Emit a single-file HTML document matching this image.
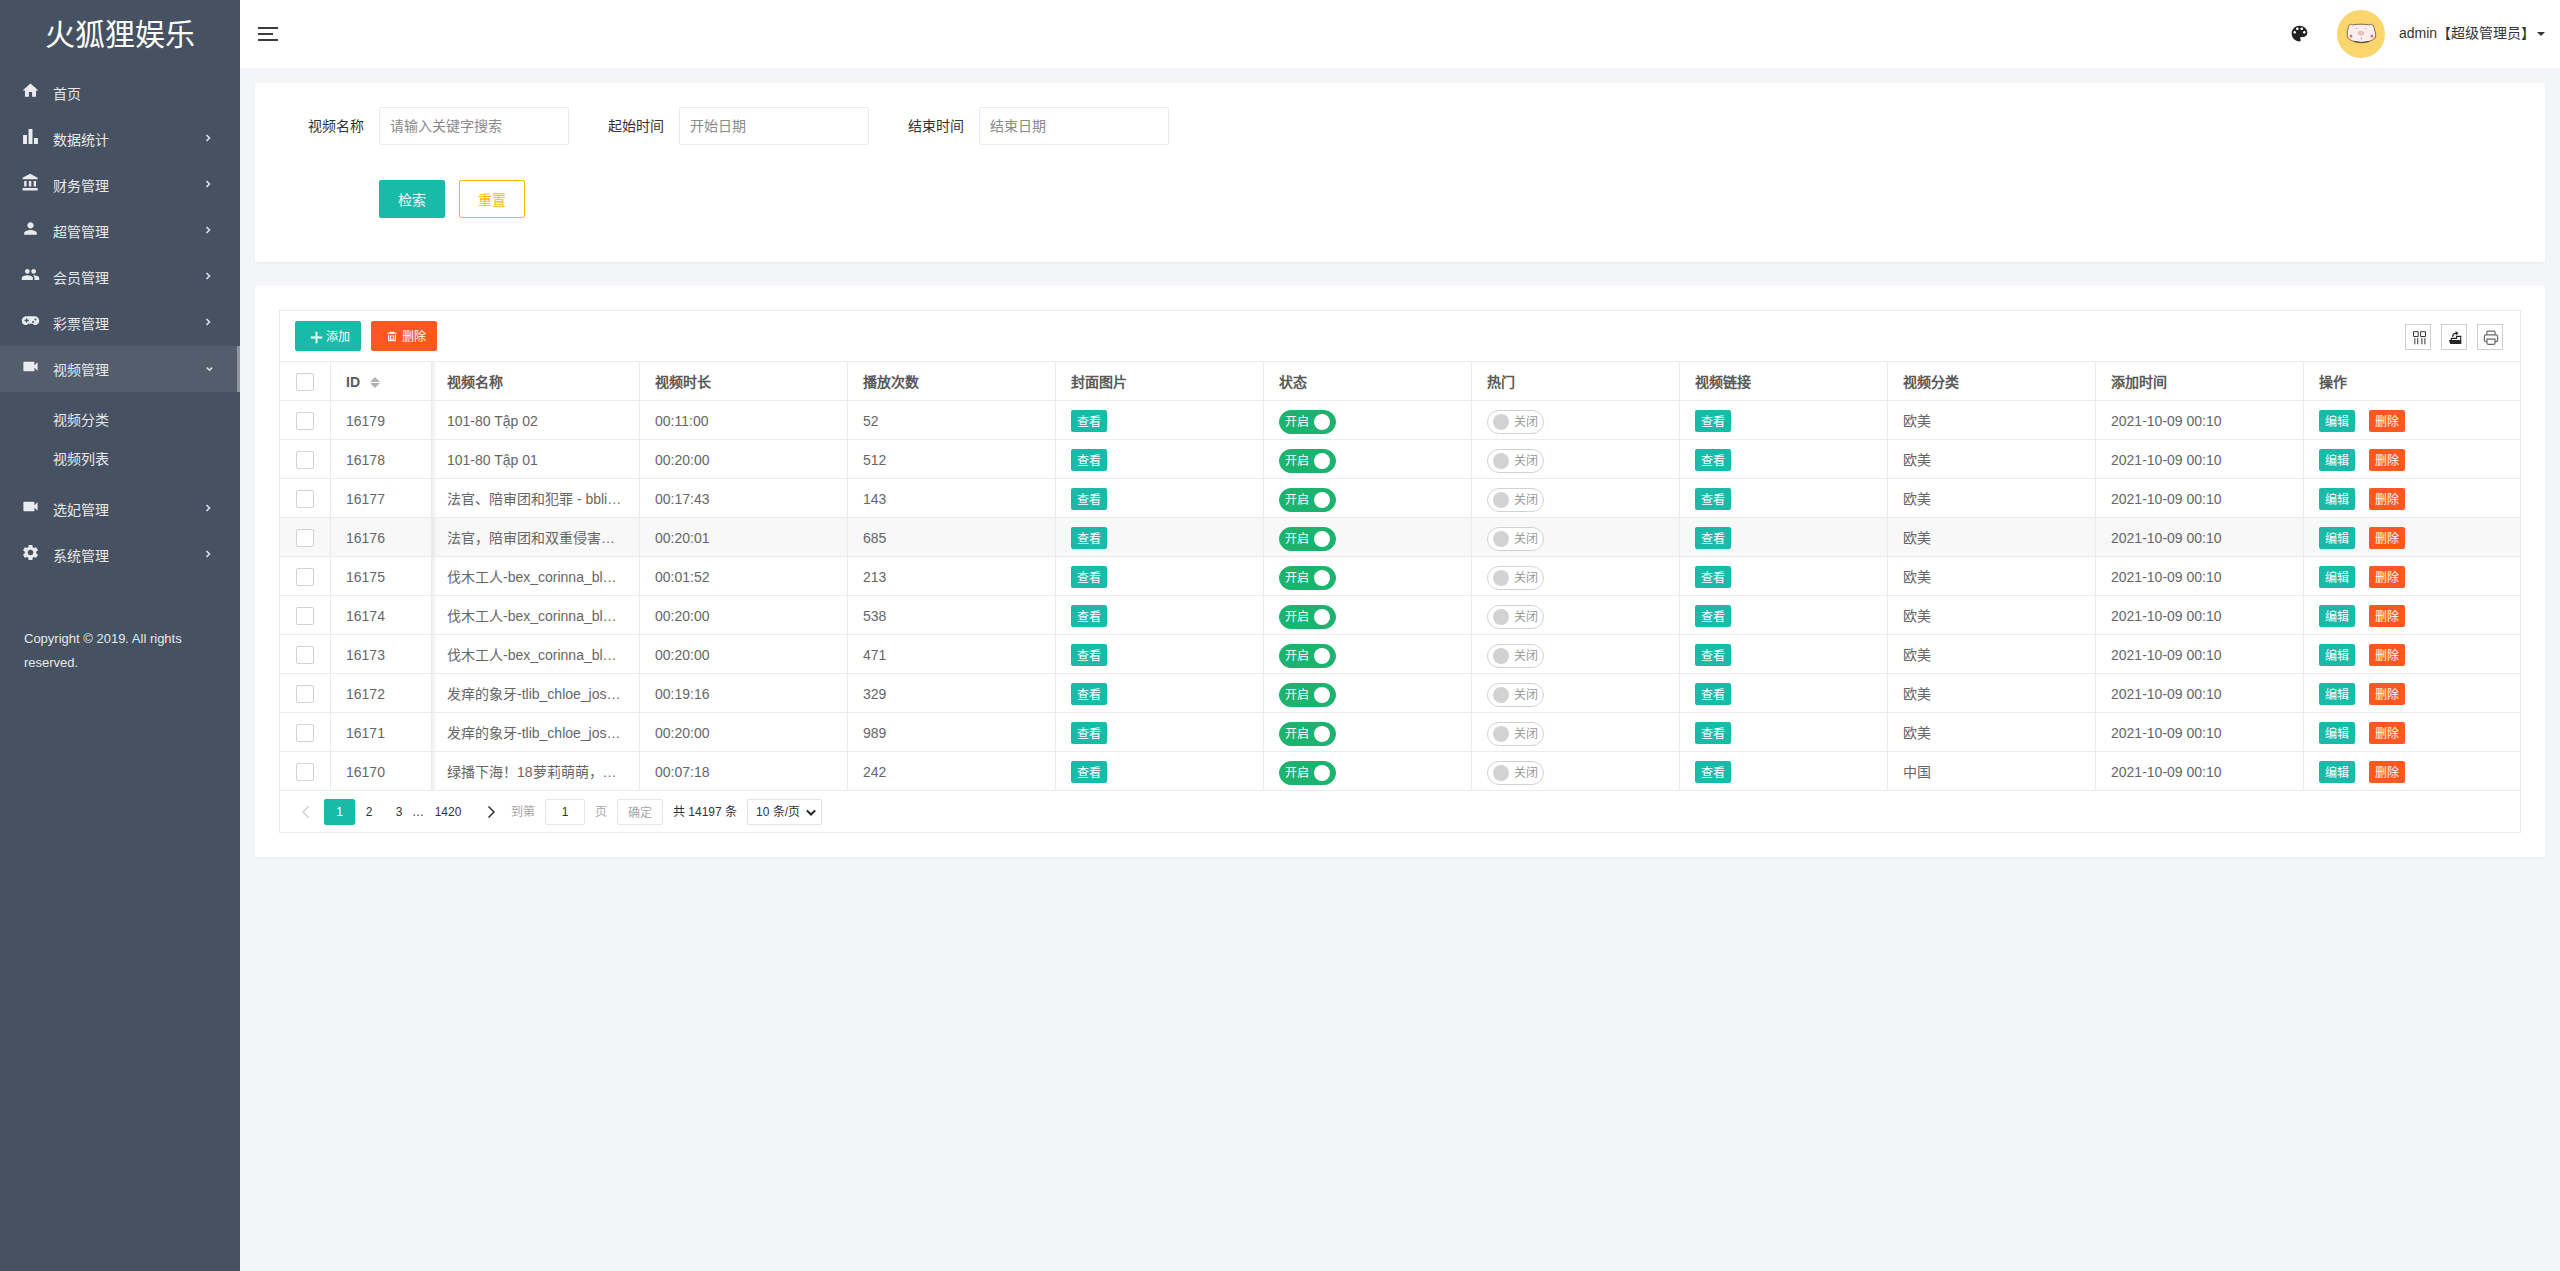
<!DOCTYPE html>
<html lang="zh-CN">
<head>
<meta charset="utf-8">
<title>视频列表</title>
<style>
*{box-sizing:border-box;margin:0;padding:0}
html,body{width:2560px;height:1271px;overflow:hidden}
body{font-family:"Liberation Sans",sans-serif;font-size:14px;color:#333;background:#f3f5f9;position:relative}
ul{list-style:none}
svg{display:block}
/* ---------- sidebar ---------- */
#side{position:absolute;left:0;top:0;width:240px;height:1271px;background:#465161;color:#e4e6e9}
#logo{position:absolute;left:0;top:0;width:240px;height:68px;line-height:69px;text-align:center;font-size:30px;color:#fff;letter-spacing:0}
#nav{position:absolute;left:0;top:70px;width:240px}
.ni{position:relative;height:46px;line-height:48px;padding-left:53px;font-size:14px;color:#e6e8eb}
.ni svg.ic{position:absolute;left:20.500px;top:10.500px;width:19px;height:19px;fill:#e9ebee}
.ni svg.ar{position:absolute;left:204px;top:17px;width:8px;height:10px;fill:none;stroke:#dfe1e5;stroke-width:1.600}
.ni.on{background:#535d6c}
.ni.on:after{content:"";position:absolute;right:0;top:0;width:3px;height:46px;background:#8f96a3}
.sub{padding:8px 0}
.sub li{height:39px;line-height:40px;padding-left:53px;font-size:14px;color:#e6e8eb}
#copy{position:absolute;left:24px;top:627px;width:200px;font-size:13px;line-height:24px;color:#e6e8eb}
/* ---------- header ---------- */
#head{position:absolute;left:240px;top:0;width:2320px;height:68px;background:#fff}
#ham{position:absolute;left:18px;top:26px;width:20px;height:16px}
#ham i{position:absolute;left:0;height:2px;background:#3a3d40;width:20px}
#pal{position:absolute;left:2049px;top:23.400px;width:21px;height:21px;fill:#222}
#ava{position:absolute;left:2097px;top:10px;width:48px;height:48px;border-radius:50%;background:#fbd56d;overflow:hidden}
#uname{position:absolute;left:2159px;top:0;height:68px;line-height:66px;font-size:14px;color:#333;white-space:nowrap}
#caret{position:absolute;left:2297px;top:32px;width:0;height:0;border:4px solid transparent;border-top:4.5px solid #333}
/* ---------- cards ---------- */
.card{position:absolute;left:255px;width:2290px;background:#fff;box-shadow:0 1px 2px rgba(0,0,0,.05)}
#c1{top:83px;height:179px}
#c2{top:286px;height:571px}
.lab{position:absolute;top:24px;height:38px;line-height:39px;font-size:14px;color:#333;white-space:nowrap}
.inp{position:absolute;top:24px;width:190px;height:38px;border:1px solid #eaeaea;border-radius:2px;line-height:37px;padding-left:10px;font-size:14px;color:#8a8a8a;background:#fff;white-space:nowrap}
/* ---------- table ---------- */
#tw{position:absolute;left:24px;top:24px;width:2242px;height:523px;border:1px solid #ebebeb;background:#fff;overflow:hidden}
#tb{position:relative;height:51px;border-bottom:1px solid #ebebeb}
.tbtn{position:absolute;top:10px;width:66px;height:30px;line-height:33px;border-radius:2px;color:#fff;font-size:12px;text-align:left;padding-left:31px;white-space:nowrap}
.tbtn svg{position:absolute;left:14.500px;top:9.500px;width:13px;height:13px;fill:none;stroke:#fff;stroke-width:1.700}
.tbtn svg.tri{left:15px;top:10px;width:12px;height:11px;stroke-width:1.200}
.tbtn.g{left:15px;background:#19bba8}
.tbtn.r{left:91px;background:#ff5722}
.tool{position:absolute;top:13px;width:26px;height:26px;border:1px solid #cfcfcf;background:#fff}
.tool svg{position:absolute;left:0;top:0;width:24px;height:24px}
.tr{display:flex;height:39px;border-bottom:1px solid #ebebeb;background:#fff}
.tr.hv{background:#f8f8f8}
.tr.hv .c{background:#f8f8f8}
.c{flex:none;width:208px;height:38px;line-height:41px;padding:0 15px;border-right:1px solid #ebebeb;font-size:14px;color:#666;white-space:nowrap;overflow:hidden;position:relative}
.c.ck{width:51px;padding:0}
.c.id{width:101px}
.c.last{width:217px;border-right:0}
.th .c{font-weight:bold;color:#5a5a5a}
.fx{z-index:2;overflow:visible;background:#fff}
.fx:after{content:"";position:absolute;left:101px;top:0;width:6px;height:38px;background:linear-gradient(to right,rgba(0,0,0,.07),rgba(0,0,0,.02) 60%,rgba(0,0,0,0))}
.cb{position:absolute;left:16px;top:11px;width:18px;height:18px;border:1px solid #d2d2d2;border-radius:2px;background:#fff}
.sort{position:absolute;left:39px;top:14px;width:10px;height:12px}
.sort b{position:absolute;left:0;width:0;height:0;border:5px solid transparent}
.sort .up{top:-4px;border-bottom-color:#b2b2b2}
.sort .dn{top:7px;border-top-color:#b2b2b2}
.xs{display:inline-block;vertical-align:top;margin-top:9px;height:22px;line-height:24px;width:36px;text-align:center;font-size:12px;color:#fff;border-radius:2px}
.xs.g{background:#19bba8}
.xs.r{background:#ff5722}
.sw{display:inline-block;vertical-align:top;margin-top:9px;position:relative;width:57px;height:24px;border-radius:12px;font-size:12px;line-height:22px}
.sw em{font-style:normal;position:absolute;top:0}
.sw i{position:absolute;top:3px;width:16px;height:16px;border-radius:50%}
.sw.on{background:#1cb36f;border:1px solid #1cb36f;color:#fff}
.sw.on em{left:5px}
.sw.on i{left:34px;background:#fff}
.sw.off{background:#fff;border:1px solid #d2d2d2;color:#999}
.sw.off em{left:26px}
.sw.off i{left:5px;background:#d2d2d2}
#pg{position:relative;height:41px;font-size:12px;color:#333}
#pg span{position:absolute;top:8px;height:26px;line-height:27px;text-align:center;white-space:nowrap}
#pg .pv{position:absolute;top:14px;width:10px;height:14px;fill:none;stroke-width:1.500}
#pg .cur{width:31px;background:#19bba8;color:#fff;border-radius:2px}
#pg .pn{width:30px}
#pg .pi{width:40px;border:1px solid #e6e6e6;border-radius:2px;line-height:25px}
#pg .pb{width:46px;border:1px solid #e6e6e6;border-radius:2px;line-height:27px;color:#a6a6a6}
#pg .ps{width:75px;border:1px solid #e2e2e2;border-radius:2px;line-height:25px;text-align:left;padding-left:8px}
#pg .ps svg{position:absolute;right:4px;top:8px;width:12px;height:9.600px;fill:none;stroke:#222;stroke-width:1.700}
.btn{position:absolute;height:38px;line-height:41px;text-align:center;font-size:14px;border-radius:2px;white-space:nowrap}
</style>
</head>
<body>
<!-- SIDEBAR -->
<div id="side">
  <div id="logo">火狐狸娱乐</div>
  <div id="nav">
    <div class="ni"><svg class="ic" viewBox="0 0 24 24"><path d="M10 20v-6h4v6h5v-8h3L12 3 2 12h3v8z"/></svg>首页</div>
    <div class="ni"><svg class="ic" viewBox="0 0 24 24"><path d="M2.600 10.100h5v11.500h-5zM9.500 2.400h5v19.200h-5zM16.400 14h5v7.600h-5z"/></svg>数据统计<svg class="ar" viewBox="0 0 8 10"><path d="M2.500 2l3 3-3 3"/></svg></div>
    <div class="ni"><svg class="ic" viewBox="0 0 24 24"><path d="M4 10v7h3v-7H4zm6 0v7h3v-7h-3zM2 22h19v-3H2v3zm14-12v7h3v-7h-3zm-4.5-9L2 6v2h19V6l-9.5-5z"/></svg>财务管理<svg class="ar" viewBox="0 0 8 10"><path d="M2.500 2l3 3-3 3"/></svg></div>
    <div class="ni"><svg class="ic" viewBox="0 0 24 24"><path d="M12 12c2.21 0 4-1.79 4-4s-1.79-4-4-4-4 1.79-4 4 1.79 4 4 4zm0 2c-2.67 0-8 1.34-8 4v2h16v-2c0-2.66-5.33-4-8-4z"/></svg>超管管理<svg class="ar" viewBox="0 0 8 10"><path d="M2.500 2l3 3-3 3"/></svg></div>
    <div class="ni"><svg class="ic" viewBox="0 0 24 24"><path d="M16 11c1.66 0 2.99-1.34 2.99-3S17.66 5 16 5c-1.66 0-3 1.34-3 3s1.34 3 3 3zm-8 0c1.66 0 2.99-1.34 2.99-3S9.66 5 8 5C6.34 5 5 6.34 5 8s1.34 3 3 3zm0 2c-2.33 0-7 1.17-7 3.5V19h14v-2.5c0-2.33-4.67-3.5-7-3.5zm8 0c-.29 0-.62.02-.97.05 1.16.84 1.97 1.97 1.97 3.45V19h6v-2.5c0-2.33-4.67-3.5-7-3.5z"/></svg>会员管理<svg class="ar" viewBox="0 0 8 10"><path d="M2.500 2l3 3-3 3"/></svg></div>
    <div class="ni"><svg class="ic" viewBox="0 0 24 24"><path transform="translate(0,.7)" fill-rule="evenodd" d="M7 6h10c3.3 0 6 2.5 6 5.6 0 3.2-2.2 5.4-4.6 5.4-1.6 0-2.7-.7-3.6-1.7h-5.6C8.300 16.300 7.200 17 5.600 17 3.200 17 1 14.800 1 11.600 1 8.500 3.700 6 7 6zM6.300 8.700v1.800H4.500v1.600h1.800v1.800h1.600v-1.800h1.800v-1.600H7.900V8.700zM15.200 11.800a1.300 1.300 0 1 0 0 2.600 1.300 1.300 0 0 0 0-2.600zM18.300 8.800a1.300 1.300 0 1 0 0 2.600 1.300 1.300 0 0 0 0-2.600z"/></svg>彩票管理<svg class="ar" viewBox="0 0 8 10"><path d="M2.500 2l3 3-3 3"/></svg></div>
    <div class="ni on"><svg class="ic" viewBox="0 0 24 24"><path d="M17 10.5V7c0-.55-.45-1-1-1H4c-.55 0-1 .45-1 1v10c0 .55.45 1 1 1h12c.55 0 1-.45 1-1v-3.5l4 4v-11l-4 4z"/></svg>视频管理<svg class="ar" viewBox="0 0 8 10" style="top:18px;left:204.500px"><path d="M1.900 3.600l2.600 2.600 2.600-2.600"/></svg></div>
    <ul class="sub"><li>视频分类</li><li>视频列表</li></ul>
    <div class="ni"><svg class="ic" viewBox="0 0 24 24"><path d="M17 10.5V7c0-.55-.45-1-1-1H4c-.55 0-1 .45-1 1v10c0 .55.45 1 1 1h12c.55 0 1-.45 1-1v-3.500l4 4v-11l-4 4z"/></svg>选妃管理<svg class="ar" viewBox="0 0 8 10"><path d="M2.500 2l3 3-3 3"/></svg></div>
    <div class="ni"><svg class="ic" viewBox="0 0 24 24"><path d="M19.140 12.940c.04-.3.06-.61.06-.94 0-.32-.02-.64-.07-.94l2.030-1.580c.18-.14.23-.41.12-.61l-1.920-3.320c-.12-.22-.37-.29-.59-.22l-2.390.96c-.5-.38-1.030-.7-1.620-.94l-.36-2.540c-.04-.24-.24-.41-.48-.41h-3.840c-.24 0-.43.17-.47.41l-.36 2.540c-.59.24-1.130.57-1.620.94l-2.390-.96c-.22-.08-.47 0-.59.22L2.740 8.870c-.12.21-.08.47.12.61l2.030 1.580c-.05.3-.09.63-.09.94s.02.64.07.94l-2.030 1.580c-.18.14-.23.41-.12.61l1.920 3.320c.12.22.37.29.59.22l2.390-.96c.5.38 1.030.7 1.620.94l.36 2.540c.05.24.24.41.48.41h3.840c.24 0 .44-.17.47-.41l.36-2.540c.59-.24 1.130-.56 1.620-.94l2.390.96c.22.08.47 0 .59-.22l1.920-3.320c.12-.22.07-.47-.12-.61l-2.010-1.580zM12 15.600c-1.980 0-3.600-1.620-3.600-3.600s1.620-3.600 3.600-3.600 3.600 1.620 3.600 3.600-1.620 3.600-3.600 3.600z"/></svg>系统管理<svg class="ar" viewBox="0 0 8 10"><path d="M2.500 2l3 3-3 3"/></svg></div>
  </div>
  <div id="copy">Copyright © 2019. All rights reserved.</div>
</div>

<!-- HEADER -->
<div id="head">
  <div id="ham"><i style="top:1px"></i><i style="top:7px;width:15px"></i><i style="top:13px"></i></div>
  <svg id="pal" viewBox="0 0 24 24"><path d="M12 3c-4.970 0-9 4.030-9 9s4.030 9 9 9c.83 0 1.500-.67 1.500-1.500 0-.39-.15-.74-.39-1.010-.23-.26-.38-.61-.38-.99 0-.83.67-1.500 1.500-1.500H16c2.760 0 5-2.240 5-5 0-4.420-4.030-8-9-8zm-5.500 9c-.83 0-1.500-.67-1.500-1.500S5.670 9 6.500 9 8 9.670 8 10.500 7.330 12 6.500 12zm3-4C8.670 8 8 7.330 8 6.500S8.670 5 9.500 5s1.500.67 1.500 1.500S10.330 8 9.500 8zm5 0c-.83 0-1.500-.67-1.500-1.500S13.670 5 14.500 5s1.500.67 1.500 1.500S15.330 8 14.500 8zm3 4c-.83 0-1.500-.67-1.500-1.500S16.670 9 17.500 9s1.500.67 1.500 1.500-.67 1.500-1.500 1.500z"/></svg>
  <div id="ava"><svg viewBox="0 0 48 48" width="48" height="48"><path d="M11 19C11.200 16.500 11.800 15 12.900 14.500C13.800 14.100 14.700 14.300 15.300 14.900C20.500 14 27.500 14 32.700 14.900C33.300 14.300 34.200 14.100 35.100 14.500C36.200 15 36.800 16.500 37.400 19C38.700 22.500 39.100 25.500 38.300 27.800C34.700 31.300 29 32.800 24.500 32.800C20 32.800 14.300 31.300 10.700 27.800C9.900 25.500 10.100 22.500 11 19Z" fill="#fdeeee" stroke="#4d3b22" stroke-width=".7"/><path d="M17 31.300Q24.500 33.600 32 31.300" fill="none" stroke="#4d3b22" stroke-width=".9"/><circle cx="14" cy="26.200" r="1.350" fill="#dc6f52"/><circle cx="35" cy="26.200" r="1.350" fill="#dc6f52"/><ellipse cx="24" cy="23.200" rx="2.900" ry="1.600" fill="#f7c9c9" stroke="#b98a8a" stroke-width=".5"/><path d="M19.600 17.700v1.100M28.700 17.700v1.100" stroke="#555" stroke-width=".6"/><path d="M24.200 27.700l.4 1.600" stroke="#555" stroke-width=".7"/></svg></div>
  <div id="uname">admin【超级管理员】</div>
  <div id="caret"></div>
</div>

<!-- SEARCH CARD -->
<div class="card" id="c1">
  <div class="lab" style="left:53px">视频名称</div>
  <div class="inp" style="left:124px">请输入关键字搜索</div>
  <div class="lab" style="left:353px">起始时间</div>
  <div class="inp" style="left:424px">开始日期</div>
  <div class="lab" style="left:653px">结束时间</div>
  <div class="inp" style="left:724px">结束日期</div>
  <div class="btn" style="left:124px;top:97px;width:66px;background:#19bba8;color:#fff">检索</div>
  <div class="btn" style="left:204px;top:97px;width:66px;border:1px solid #ffb800;color:#ffb800;line-height:39px">重置</div>
</div>

<!-- TABLE CARD -->
<div class="card" id="c2">
<div id="tw">
<div id="tb"><span class="tbtn g"><svg viewBox="0 0 12 12"><path d="M6 .8v10.400M.8 6h10.400"/></svg>添加</span><span class="tbtn r"><svg viewBox="0 0 12 12" class="tri"><path d="M1 2.500h10M4 2.500V1.300h4v1.200M2.300 4v6.500h7.400V4M4.300 5.500h3.400v3.500H4.300z"/></svg>删除</span>
<span class="tool" style="left:2125px"><svg viewBox="0 0 24 24"><path d="M7.500 6.700h4.700v4.800H7.500zM14.600 6.700h4.900v4.800h-4.900zM8.800 13.100v6.200M11.700 13.100v6.200M15.900 13.100v6.200M18.900 13.100v6.200" fill="none" stroke="#3a3340" stroke-width="1"/></svg></span>
<span class="tool" style="left:2161px"><svg viewBox="0 0 24 24"><path d="M7 15h12.300v4.100H8.100z" fill="#262626"/><path d="M9.300 15v-1.700h5.300v-2h4.100V15" fill="none" stroke="#262626" stroke-width="1.200"/><path d="M10.700 11.700c0-2.200 1.300-3.400 3.500-3.600" fill="none" stroke="#262626" stroke-width="1.400"/><path d="M13.700 6.100l2.800 2.200-2.800 2.300z" fill="#262626"/></svg></span>
<span class="tool" style="left:2197px"><svg viewBox="0 0 24 24"><path d="M8.900 9.900V7.600c0-.8.600-1.400 1.400-1.400h5.400c.8 0 1.400.6 1.400 1.400v2.300M8.900 16.600H8c-.9 0-1.600-.7-1.600-1.600v-3.500c0-.9.700-1.600 1.600-1.600h10c.9 0 1.600.7 1.600 1.600V15c0 .9-.7 1.600-1.600 1.600h-.9M9 14.200h8V18c0 .8-.6 1.400-1.400 1.400h-5.200c-.8 0-1.400-.6-1.400-1.400z" fill="none" stroke="#6a6a6a" stroke-width="1.200"/></svg></span>
</div>
<div class="tr th"><div class="c ck"><i class="cb"></i></div><div class="c id fx">ID<span class="sort"><b class="up"></b><b class="dn"></b></span></div>
<div class="c">视频名称</div>
<div class="c">视频时长</div>
<div class="c">播放次数</div>
<div class="c">封面图片</div>
<div class="c">状态</div>
<div class="c">热门</div>
<div class="c">视频链接</div>
<div class="c">视频分类</div>
<div class="c">添加时间</div>
<div class="c last">操作</div>
</div>
<div class="tr"><div class="c ck"><i class="cb"></i></div><div class="c id fx">16179</div><div class="c">101-80 Tập 02</div><div class="c">00:11:00</div><div class="c">52</div><div class="c"><span class="xs g">查看</span></div><div class="c"><span class="sw on"><em>开启</em><i></i></span></div><div class="c"><span class="sw off"><i></i><em>关闭</em></span></div><div class="c"><span class="xs g">查看</span></div><div class="c">欧美</div><div class="c">2021-10-09 00:10</div><div class="c last"><span class="xs g">编辑</span><span class="xs r" style="margin-left:14px">删除</span></div></div>
<div class="tr"><div class="c ck"><i class="cb"></i></div><div class="c id fx">16178</div><div class="c">101-80 Tập 01</div><div class="c">00:20:00</div><div class="c">512</div><div class="c"><span class="xs g">查看</span></div><div class="c"><span class="sw on"><em>开启</em><i></i></span></div><div class="c"><span class="sw off"><i></i><em>关闭</em></span></div><div class="c"><span class="xs g">查看</span></div><div class="c">欧美</div><div class="c">2021-10-09 00:10</div><div class="c last"><span class="xs g">编辑</span><span class="xs r" style="margin-left:14px">删除</span></div></div>
<div class="tr"><div class="c ck"><i class="cb"></i></div><div class="c id fx">16177</div><div class="c">法官、陪审团和犯罪 - bbli…</div><div class="c">00:17:43</div><div class="c">143</div><div class="c"><span class="xs g">查看</span></div><div class="c"><span class="sw on"><em>开启</em><i></i></span></div><div class="c"><span class="sw off"><i></i><em>关闭</em></span></div><div class="c"><span class="xs g">查看</span></div><div class="c">欧美</div><div class="c">2021-10-09 00:10</div><div class="c last"><span class="xs g">编辑</span><span class="xs r" style="margin-left:14px">删除</span></div></div>
<div class="tr hv"><div class="c ck"><i class="cb"></i></div><div class="c id fx">16176</div><div class="c">法官，陪审团和双重侵害…</div><div class="c">00:20:01</div><div class="c">685</div><div class="c"><span class="xs g">查看</span></div><div class="c"><span class="sw on"><em>开启</em><i></i></span></div><div class="c"><span class="sw off"><i></i><em>关闭</em></span></div><div class="c"><span class="xs g">查看</span></div><div class="c">欧美</div><div class="c">2021-10-09 00:10</div><div class="c last"><span class="xs g">编辑</span><span class="xs r" style="margin-left:14px">删除</span></div></div>
<div class="tr"><div class="c ck"><i class="cb"></i></div><div class="c id fx">16175</div><div class="c">伐木工人-bex_corinna_bl…</div><div class="c">00:01:52</div><div class="c">213</div><div class="c"><span class="xs g">查看</span></div><div class="c"><span class="sw on"><em>开启</em><i></i></span></div><div class="c"><span class="sw off"><i></i><em>关闭</em></span></div><div class="c"><span class="xs g">查看</span></div><div class="c">欧美</div><div class="c">2021-10-09 00:10</div><div class="c last"><span class="xs g">编辑</span><span class="xs r" style="margin-left:14px">删除</span></div></div>
<div class="tr"><div class="c ck"><i class="cb"></i></div><div class="c id fx">16174</div><div class="c">伐木工人-bex_corinna_bl…</div><div class="c">00:20:00</div><div class="c">538</div><div class="c"><span class="xs g">查看</span></div><div class="c"><span class="sw on"><em>开启</em><i></i></span></div><div class="c"><span class="sw off"><i></i><em>关闭</em></span></div><div class="c"><span class="xs g">查看</span></div><div class="c">欧美</div><div class="c">2021-10-09 00:10</div><div class="c last"><span class="xs g">编辑</span><span class="xs r" style="margin-left:14px">删除</span></div></div>
<div class="tr"><div class="c ck"><i class="cb"></i></div><div class="c id fx">16173</div><div class="c">伐木工人-bex_corinna_bl…</div><div class="c">00:20:00</div><div class="c">471</div><div class="c"><span class="xs g">查看</span></div><div class="c"><span class="sw on"><em>开启</em><i></i></span></div><div class="c"><span class="sw off"><i></i><em>关闭</em></span></div><div class="c"><span class="xs g">查看</span></div><div class="c">欧美</div><div class="c">2021-10-09 00:10</div><div class="c last"><span class="xs g">编辑</span><span class="xs r" style="margin-left:14px">删除</span></div></div>
<div class="tr"><div class="c ck"><i class="cb"></i></div><div class="c id fx">16172</div><div class="c">发痒的象牙-tlib_chloe_jos…</div><div class="c">00:19:16</div><div class="c">329</div><div class="c"><span class="xs g">查看</span></div><div class="c"><span class="sw on"><em>开启</em><i></i></span></div><div class="c"><span class="sw off"><i></i><em>关闭</em></span></div><div class="c"><span class="xs g">查看</span></div><div class="c">欧美</div><div class="c">2021-10-09 00:10</div><div class="c last"><span class="xs g">编辑</span><span class="xs r" style="margin-left:14px">删除</span></div></div>
<div class="tr"><div class="c ck"><i class="cb"></i></div><div class="c id fx">16171</div><div class="c">发痒的象牙-tlib_chloe_jos…</div><div class="c">00:20:00</div><div class="c">989</div><div class="c"><span class="xs g">查看</span></div><div class="c"><span class="sw on"><em>开启</em><i></i></span></div><div class="c"><span class="sw off"><i></i><em>关闭</em></span></div><div class="c"><span class="xs g">查看</span></div><div class="c">欧美</div><div class="c">2021-10-09 00:10</div><div class="c last"><span class="xs g">编辑</span><span class="xs r" style="margin-left:14px">删除</span></div></div>
<div class="tr"><div class="c ck"><i class="cb"></i></div><div class="c id fx">16170</div><div class="c">绿播下海！18萝莉萌萌，…</div><div class="c">00:07:18</div><div class="c">242</div><div class="c"><span class="xs g">查看</span></div><div class="c"><span class="sw on"><em>开启</em><i></i></span></div><div class="c"><span class="sw off"><i></i><em>关闭</em></span></div><div class="c"><span class="xs g">查看</span></div><div class="c">中国</div><div class="c">2021-10-09 00:10</div><div class="c last"><span class="xs g">编辑</span><span class="xs r" style="margin-left:14px">删除</span></div></div>
<div id="pg"><svg class="pv" viewBox="0 0 10 14" style="left:21px"><path d="M7.500 1.500L2 7l5.500 5.500" stroke="#d2d2d2"/></svg><span class="cur" style="left:44px">1</span><span class="pn" style="left:74px">2</span><span class="pn" style="left:104px">3</span><span class="pn" style="left:126px;width:24px">…</span><span class="pn" style="left:147px;width:42px">1420</span><svg class="pv" viewBox="0 0 10 14" style="left:206px"><path d="M2.500 1.500L8 7l-5.500 5.500" stroke="#333"/></svg><span class="pt" style="left:231px;color:#a6a6a6">到第</span><span class="pi" style="left:265px">1</span><span class="pt" style="left:315px;color:#a6a6a6">页</span><span class="pb" style="left:337px">确定</span><span class="pt" style="left:393px">共 14197 条</span><span class="ps" style="left:467px">10 条/页<svg viewBox="0 0 10 8"><path d="M1.500 2l3.500 3.500L8.500 2"/></svg></span></div>
</div>
</div>
</body>
</html>
